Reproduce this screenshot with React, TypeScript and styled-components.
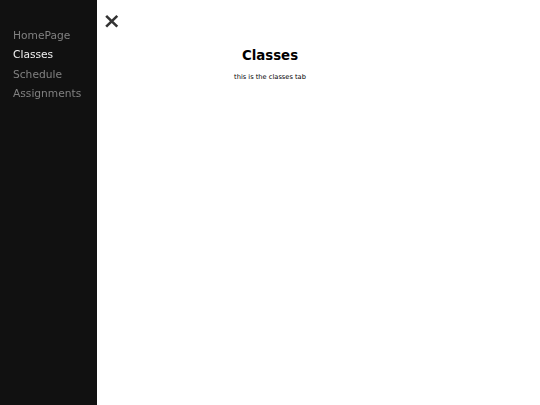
import React from "react";
import styled, { createGlobalStyle } from "styled-components";

const GlobalStyle = createGlobalStyle`
  html, body {
    margin: 0;
    padding: 0;
    background: #ffffff;
    font-family: "DejaVu Sans", Verdana, sans-serif;
  }
`;

const Page = styled.div`
  position: relative;
  min-height: 100vh;
`;

const Drawer = styled.aside`
  position: fixed;
  top: 0;
  left: 0;
  width: 97px;
  height: 100%;
  background: #111111;
  box-sizing: border-box;
  padding-top: 25.5px;
`;

const NavLink = styled.a<{ $active?: boolean }>`
  display: block;
  padding-left: 13px;
  font-size: 10.67px;
  line-height: 19.5px;
  color: ${(p) => (p.$active ? "#f1f1f1" : "#818181")};
  text-decoration: none;
  white-space: nowrap;
  cursor: pointer;
`;

const CloseButton = styled.button`
  position: absolute;
  top: 9.5px;
  left: 100%;
  margin-left: 5.5px;
  padding: 0;
  border: none;
  background: transparent;
  font-family: "DejaVu Sans", sans-serif;
  font-size: 22px;
  font-weight: bold;
  line-height: 22px;
  color: #333333;
  cursor: pointer;
`;

const Main = styled.main`
  padding-top: 47.6px;
  text-align: center;
  color: #000000;
`;

const Title = styled.h2`
  margin: 0;
  font-size: 13.33px;
  font-weight: bold;
`;

const Body = styled.p`
  margin: 10px 0 0;
  font-size: 6.67px;
`;

const links = ["HomePage", "Classes", "Schedule", "Assignments"];

export default function App() {
  return (
    <>
      <GlobalStyle />
      <Page>
        <Main>
          <Title>Classes</Title>
          <Body>this is the classes tab</Body>
        </Main>
        <Drawer>
          {links.map((l) => (
            <NavLink key={l} $active={l === "Classes"}>
              {l}
            </NavLink>
          ))}
          <CloseButton aria-label="Close">×</CloseButton>
        </Drawer>
      </Page>
    </>
  );
}
